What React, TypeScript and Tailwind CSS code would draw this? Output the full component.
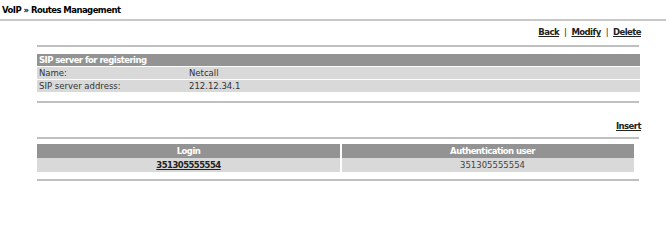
export default function App() {
  return (
    <div className="w-[666px] h-[207px] bg-white text-[8.5px] leading-[13px] text-black" style={{ fontFamily: '"DejaVu Sans", Verdana, sans-serif' }}>
      <div className="pl-[2px] pt-[4px] h-[19px] font-bold tracking-[-0.55px]">VoIP » Routes Management</div>
      <div className="h-[2px] bg-[#c8c8c8]" />

      <div className="ml-[37px] w-[604px]">
        <div className="mt-[5px] flex justify-end gap-[5px] font-bold tracking-[-0.55px] text-[#222]">
          <a className="underline" href="#">Back</a>
          <span className="font-normal">|</span>
          <a className="underline" href="#">Modify</a>
          <span className="font-normal">|</span>
          <a className="underline" href="#">Delete</a>
        </div>
        <div className="mt-[6px] h-[2px] w-[602px] bg-[#c0c0c0]" />

        <div className="mt-[7px] w-[603px] leading-[12px]">
          <div className="h-[12px] bg-[#939393] pl-[2px] font-bold tracking-[-0.55px] text-white">SIP server for registering</div>
          <div className="mt-[1px] flex h-[12px] bg-[#d9d9d9] text-[#333]">
            <div className="w-[150px] pl-[2px]">Name:</div>
            <div className="pl-[2px]">Netcall</div>
          </div>
          <div className="mt-[1px] flex h-[12px] bg-[#d9d9d9] text-[#333]">
            <div className="w-[150px] pl-[2px]">SIP server address:</div>
            <div className="pl-[2px]">212.12.34.1</div>
          </div>
        </div>
        <div className="mt-[9px] h-[2px] w-[602px] bg-[#c0c0c0]" />

        <div className="mt-[17px] flex justify-end font-bold tracking-[-0.55px] text-[#222]">
          <a className="underline" href="#">Insert</a>
        </div>
        <div className="mt-[4px] h-[2px] w-[602px] bg-[#c0c0c0]" />

        <div className="mt-[5px] flex gap-[2px]">
          <div className="w-[303px]">
            <div className="h-[14px] bg-[#939393] text-center font-bold leading-[14px] tracking-[-0.55px] text-white">Login</div>
            <div className="h-[14px] bg-[#d9d9d9] text-center font-bold leading-[14px] tracking-[-0.55px] text-[#222]">
              <a className="underline" href="#">351305555554</a>
            </div>
          </div>
          <div className="w-[292px]">
            <div className="h-[14px] bg-[#939393] pl-[9px] text-center font-bold leading-[14px] tracking-[-0.55px] text-white">Authentication user</div>
            <div className="h-[14px] bg-[#d9d9d9] pl-[9px] text-center leading-[14px] text-[#444]">351305555554</div>
          </div>
        </div>
        <div className="mt-[7px] h-[2px] w-[602px] bg-[#c0c0c0]" />
      </div>
    </div>
  );
}
